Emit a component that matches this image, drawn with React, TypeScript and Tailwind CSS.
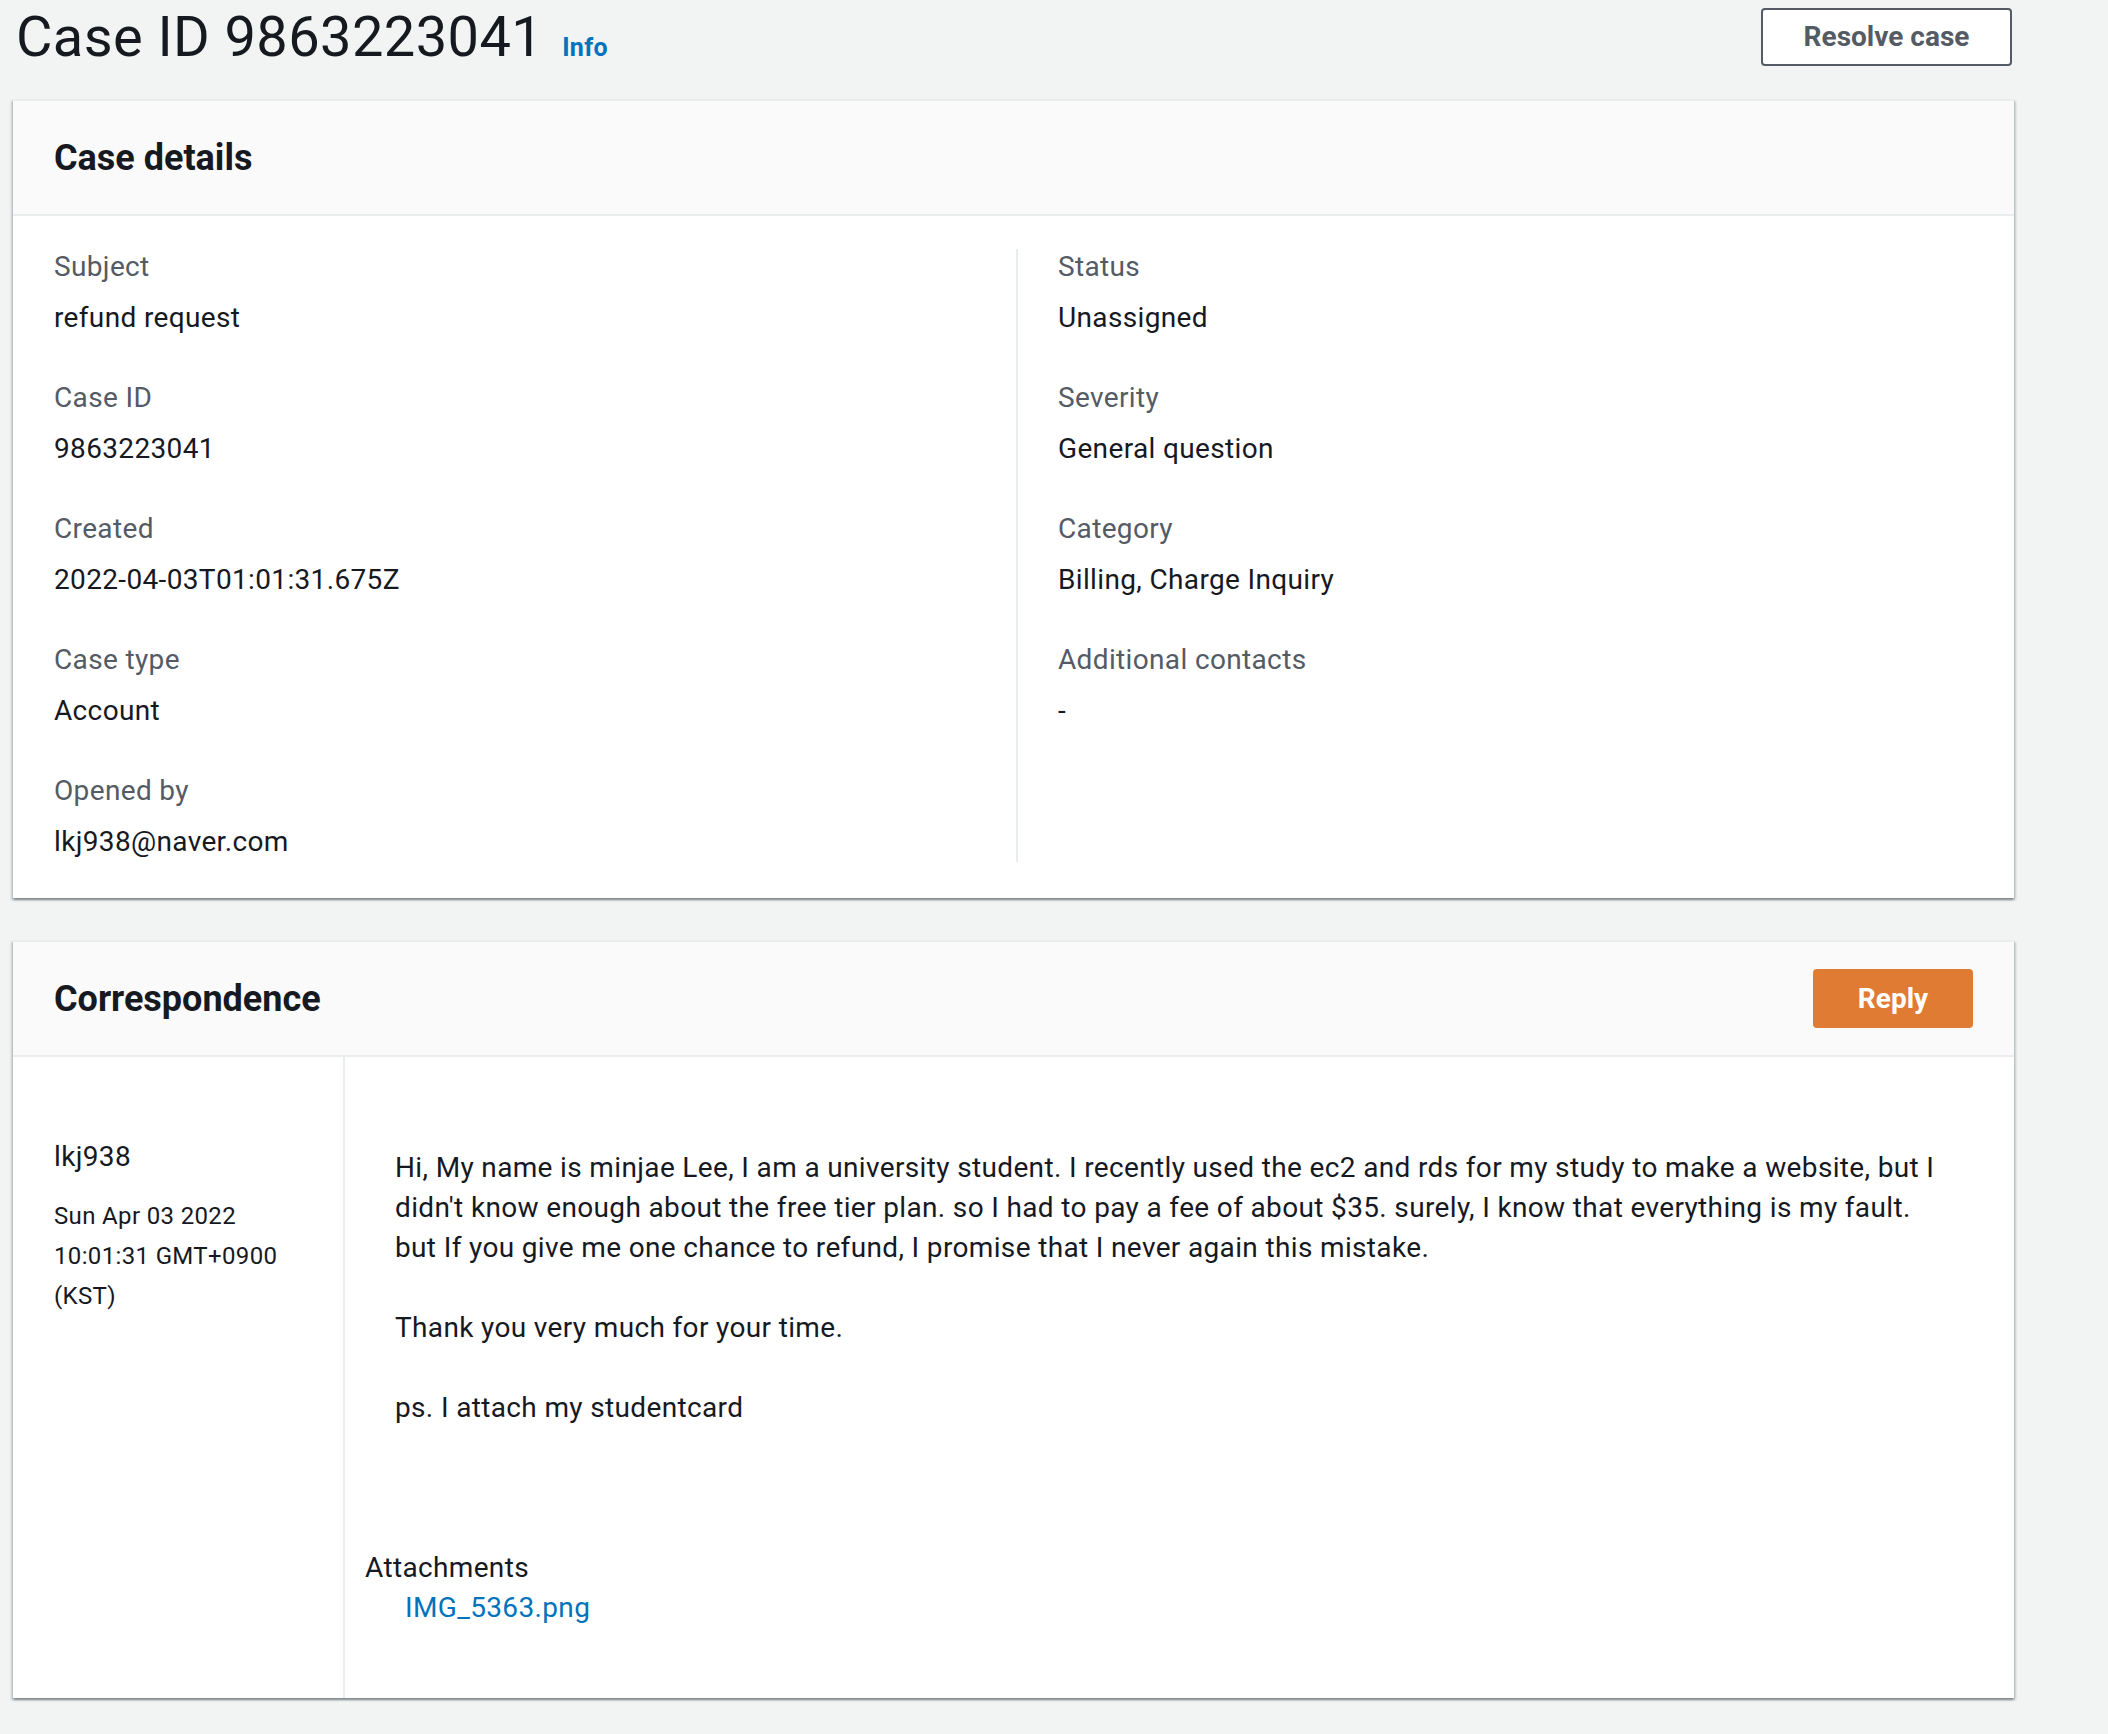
import React from 'react';

const font = { fontFamily: 'Roboto, "Liberation Sans", sans-serif' };

const cardClass =
  'bg-white border-t-2 border-[#eaeded] shadow-[0_2px_2px_0_rgba(0,28,36,0.3),2px_2px_2px_0_rgba(0,28,36,0.15),-2px_2px_2px_0_rgba(0,28,36,0.15)]';

const leftFields = [
  { label: 'Subject', value: 'refund request' },
  { label: 'Case ID', value: '9863223041' },
  { label: 'Created', value: '2022-04-03T01:01:31.675Z' },
  { label: 'Case type', value: 'Account' },
  { label: 'Opened by', value: 'lkj938@naver.com' },
];

const rightFields = [
  { label: 'Status', value: 'Unassigned' },
  { label: 'Severity', value: 'General question' },
  { label: 'Category', value: 'Billing, Charge Inquiry' },
  { label: 'Additional contacts', value: '-' },
];

const message =
  "Hi, My name is minjae Lee, I am a university student. I recently used the ec2 and rds for my study to make a website, but I\n" +
  "didn't know enough about the free tier plan. so I had to pay a fee of about $35. surely, I know that everything is my fault.\n" +
  'but If you give me one chance to refund, I promise that I never again this mistake.\n' +
  '\n' +
  'Thank you very much for your time.\n' +
  '\n' +
  'ps. I attach my studentcard';

const Field: React.FC<{ label: string; value: string }> = ({ label, value }) => (
  <div>
    <div className="text-[28px] leading-[36px] text-[#545b64]">{label}</div>
    <div className="mt-[13px] text-[28px] leading-[40px] text-[#16191f]">{value}</div>
  </div>
);

const App: React.FC = () => {
  return (
    <div className="min-h-screen bg-[#f2f3f3] pb-[37px] tracking-[0.35px]" style={font}>
      <div className="ml-[13px] w-[2001px]">
        {/* page header */}
        <div className="flex h-[74px] items-center justify-between">
          <div className="flex items-baseline pl-[3px]">
            <h1 className="text-[56px] leading-[66px] font-normal tracking-[0.4px] text-[#16191f]">Case ID 9863223041</h1>
            <a className="ml-[19px] text-[25px] font-bold text-[#0073bb]">Info</a>
          </div>
          <button className="mr-[2px] h-[58px] w-[251px] rounded-[4px] border-2 border-[#545b64] bg-white text-[28px] font-bold tracking-normal text-[#545b64]">
            Resolve case
          </button>
        </div>

        {/* case details */}
        <div className={`mt-[25px] ${cardClass}`}>
          <div className="flex h-[115px] items-center border-b-2 border-[#eaeded] bg-[#fafafa] px-[41px]">
            <h2 className="text-[36px] font-bold tracking-normal text-[#16191f]">Case details</h2>
          </div>
          <div className="grid grid-cols-2 pl-[41px] pr-[36px] pt-[33px] pb-[36px]">
            <div className="space-y-[42px] pr-[40px]">
              {leftFields.map((f) => (
                <Field key={f.label} label={f.label} value={f.value} />
              ))}
            </div>
            <div className="space-y-[42px] border-l-2 border-[#eaeded] pl-[40px]">
              {rightFields.map((f) => (
                <Field key={f.label} label={f.label} value={f.value} />
              ))}
            </div>
          </div>
        </div>

        {/* correspondence */}
        <div className={`mt-[42px] ${cardClass}`}>
          <div className="flex h-[115px] items-center justify-between border-b-2 border-[#eaeded] bg-[#fafafa] pl-[41px] pr-[41px]">
            <h2 className="text-[36px] font-bold tracking-normal text-[#16191f]">Correspondence</h2>
            <button className="h-[59px] w-[160px] rounded-[4px] bg-[#e07b33] text-[28px] font-bold tracking-normal text-white">
              Reply
            </button>
          </div>
          <div className="flex">
            <div className="w-[332px] shrink-0 border-r-2 border-[#eaeded] pl-[41px] pr-[20px] pt-[80px]">
              <div className="text-[28px] leading-[40px] text-[#16191f]">lkj938</div>
              <div className="mt-[19px] text-[24px] leading-[40px] text-[#16191f]">
                <div>Sun Apr 03 2022</div>
                <div>10:01:31 GMT+0900</div>
                <div>(KST)</div>
              </div>
            </div>
            <div className="flex-1 pl-[20px] pt-[91px] pb-[70px]">
              <div className="ml-[30px] whitespace-pre text-[28px] leading-[40px] text-[#16191f]">{message}</div>
              <div className="mt-[120px] text-[28px] leading-[40px] text-[#16191f]">Attachments</div>
              <a className="ml-[40px] block text-[28px] leading-[40px] text-[#0073bb]">IMG_5363.png</a>
            </div>
          </div>
        </div>
      </div>
    </div>
  );
};

export default App;
